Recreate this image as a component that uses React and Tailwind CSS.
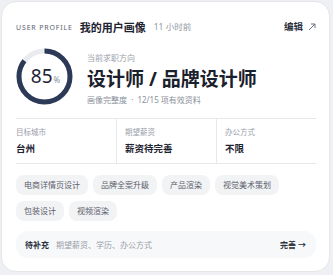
import React from 'react'

const tags = ['电商详情页设计', '品牌全案升级', '产品渲染', '视觉美术策划', '包装设计', '视频渲染']

const facts = [
  { label: '目标城市', value: '台州' },
  { label: '期望薪资', value: '薪资待完善' },
  { label: '办公方式', value: '不限' },
]

function Ring({ percent }) {
  const r = 25.5
  const c = 2 * Math.PI * r
  return (
    <div className="relative w-[57px] h-[57px] shrink-0">
      <svg width="57" height="57" viewBox="0 0 57 57" className="-rotate-90">
        <circle cx="28.5" cy="28.5" r={r} fill="none" stroke="#e9ebef" strokeWidth="5" />
        <circle
          cx="28.5"
          cy="28.5"
          r={r}
          fill="none"
          stroke="#2c3957"
          strokeWidth="5"
          strokeDasharray={`${(c * percent) / 100} ${c}`}
        />
      </svg>
      <div className="absolute inset-0 flex items-center justify-center pl-[2px]">
        <span className="text-[19px] leading-none text-[#1e2535]">{percent}</span>
        <span className="text-[8px] leading-none text-[#8a909b] mt-[6px] ml-[1px]">%</span>
      </div>
    </div>
  )
}

export default function App() {
  return (
    <div
      className="w-[333px] h-[275px] bg-[#eef0f3] p-[1px]"
      style={{ fontFamily: '"Noto Sans", "Noto Sans CJK SC", sans-serif' }}
    >
      <div className="w-[329px] h-[271px] bg-white rounded-[15px] border border-[#e4e6ea] px-[14px] pt-[17px]">
        {/* Header */}
        <div className="flex items-center justify-between h-[16px]">
          <div className="flex items-center">
            <span className="text-[7px] tracking-[0.12em] text-[#5b6270] leading-none">USER PROFILE</span>
            <span className="ml-[7px] text-[11px] font-semibold text-[#1d2330] leading-none">我的用户画像</span>
            <span className="ml-[8px] text-[8.5px] text-[#9096a1] leading-none">11 小时前</span>
          </div>
          <div className="flex items-center gap-[5px] mr-[-1px]">
            <span className="text-[9.5px] font-semibold text-[#2a303c] leading-none">编辑</span>
            <svg width="8" height="8" viewBox="0 0 8 8" fill="none" stroke="#6b7280" strokeWidth="1">
              <path d="M1 7 L7 1 M3 1 H7 V5" />
            </svg>
          </div>
        </div>

        {/* Summary */}
        <div className="flex items-center gap-[14px] mt-[13px]">
          <Ring percent={85} />
          <div className="flex flex-col pt-[4px]">
            <span className="text-[8px] text-[#9aa0aa] leading-none">当前求职方向</span>
            <span className="text-[19px] font-bold text-[#1a202c] leading-none mt-[8px]">设计师 / 品牌设计师</span>
            <span className="text-[8px] text-[#8a909b] leading-none mt-[7px]">画像完整度 &nbsp;·&nbsp; 12/15 项有效资料</span>
          </div>
        </div>

        {/* Facts */}
        <div className="grid grid-cols-3 mt-[13px] border-y border-[#e6e8ec] h-[46px] mr-[-1px]">
          {facts.map((f, i) => (
            <div
              key={f.label}
              className={`flex flex-col justify-center ${i > 0 ? 'border-l border-[#e6e8ec] pl-[8px]' : ''}`}
            >
              <span className="text-[7.5px] text-[#9aa0aa] leading-none">{f.label}</span>
              <span className="text-[9.5px] font-bold text-[#1d2330] leading-none mt-[7px]">{f.value}</span>
            </div>
          ))}
        </div>

        {/* Tags */}
        <div className="flex flex-wrap gap-x-[5px] gap-y-[6px] mt-[11px] w-[280px]">
          {tags.map((t) => (
            <span
              key={t}
              className="h-[20px] px-[8px] flex items-center rounded-[8px] bg-[#f2f3f5] text-[8px] text-[#5a606b] leading-none"
            >
              {t}
            </span>
          ))}
        </div>

        {/* Pending */}
        <div className="mt-[10px] h-[27px] rounded-[12px] bg-[#f7f8fa] flex items-center justify-between pl-[9px] pr-[10px] mr-[-1px]">
          <div className="flex items-center">
            <span className="text-[8px] font-bold text-[#2a303c] leading-none">待补充</span>
            <span className="ml-[7px] text-[8px] text-[#9aa0aa] leading-none">期望薪资、学历、办公方式</span>
          </div>
          <span className="text-[8px] font-bold text-[#2a303c] leading-none">完善 →</span>
        </div>
      </div>
    </div>
  )
}
